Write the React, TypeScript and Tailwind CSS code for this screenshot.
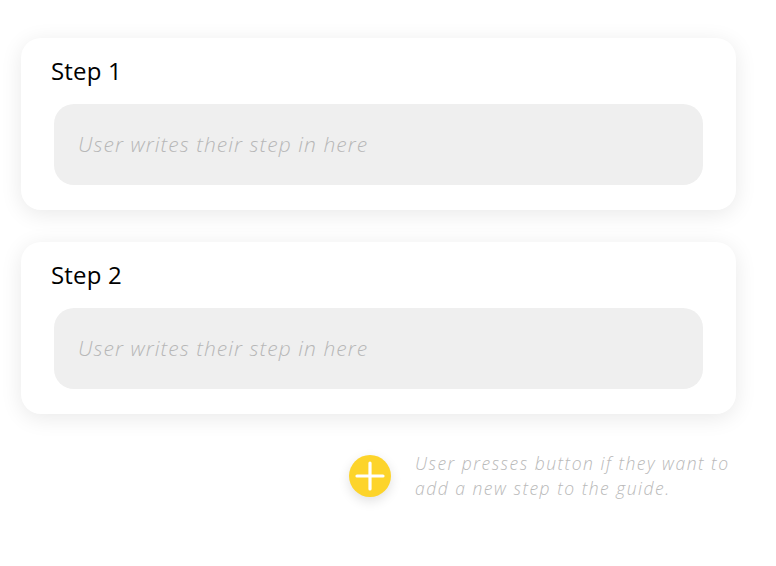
import React from "react";

const font = { fontFamily: '"Open Sans", "Noto Sans", sans-serif' };

function StepCard({ title }: { title: string }) {
  return (
    <div className="w-[715px] rounded-[20px] bg-white px-[33px] pt-[15px] pb-[25px] shadow-[0_4px_22px_rgba(0,0,0,0.09)]">
      <div className="-ml-[3px] text-[24px] font-medium leading-[36px] text-black tracking-[0.2px]">{title}</div>
      <div className="mt-[15px] flex h-[81px] items-center rounded-[20px] bg-[#efefef] pl-[24px]">
        <span className="text-[21px] font-light italic tracking-[1.05px] text-[#b7b7b7]">User writes their step in here</span>
      </div>
    </div>
  );
}

export default function App() {
  return (
    <div className="h-[566px] w-[776px] bg-white" style={font}>
      <div className="flex flex-col gap-[32px] pl-[21px] pt-[38px]">
        <StepCard title="Step 1" />
        <StepCard title="Step 2" />
      </div>
      <div className="mt-[36px] flex items-center pl-[349px]">
        <button className="flex h-[42px] w-[42px] items-center justify-center rounded-full bg-[#fdd42a] shadow-[0_4px_12px_rgba(0,0,0,0.12)]">
          <svg width="30" height="30" viewBox="0 0 30 30">
            <path d="M15 2 V28 M2 15 H28" stroke="white" strokeWidth="3.2" strokeLinecap="round" />
          </svg>
        </button>
        <div className="ml-[24px] mt-[1px] text-[17.5px] font-light italic leading-[25px] tracking-[1.5px] text-[#b9b9b9]">
          User presses button if they want to
          <br />
          add a new step to the guide.
        </div>
      </div>
    </div>
  );
}
